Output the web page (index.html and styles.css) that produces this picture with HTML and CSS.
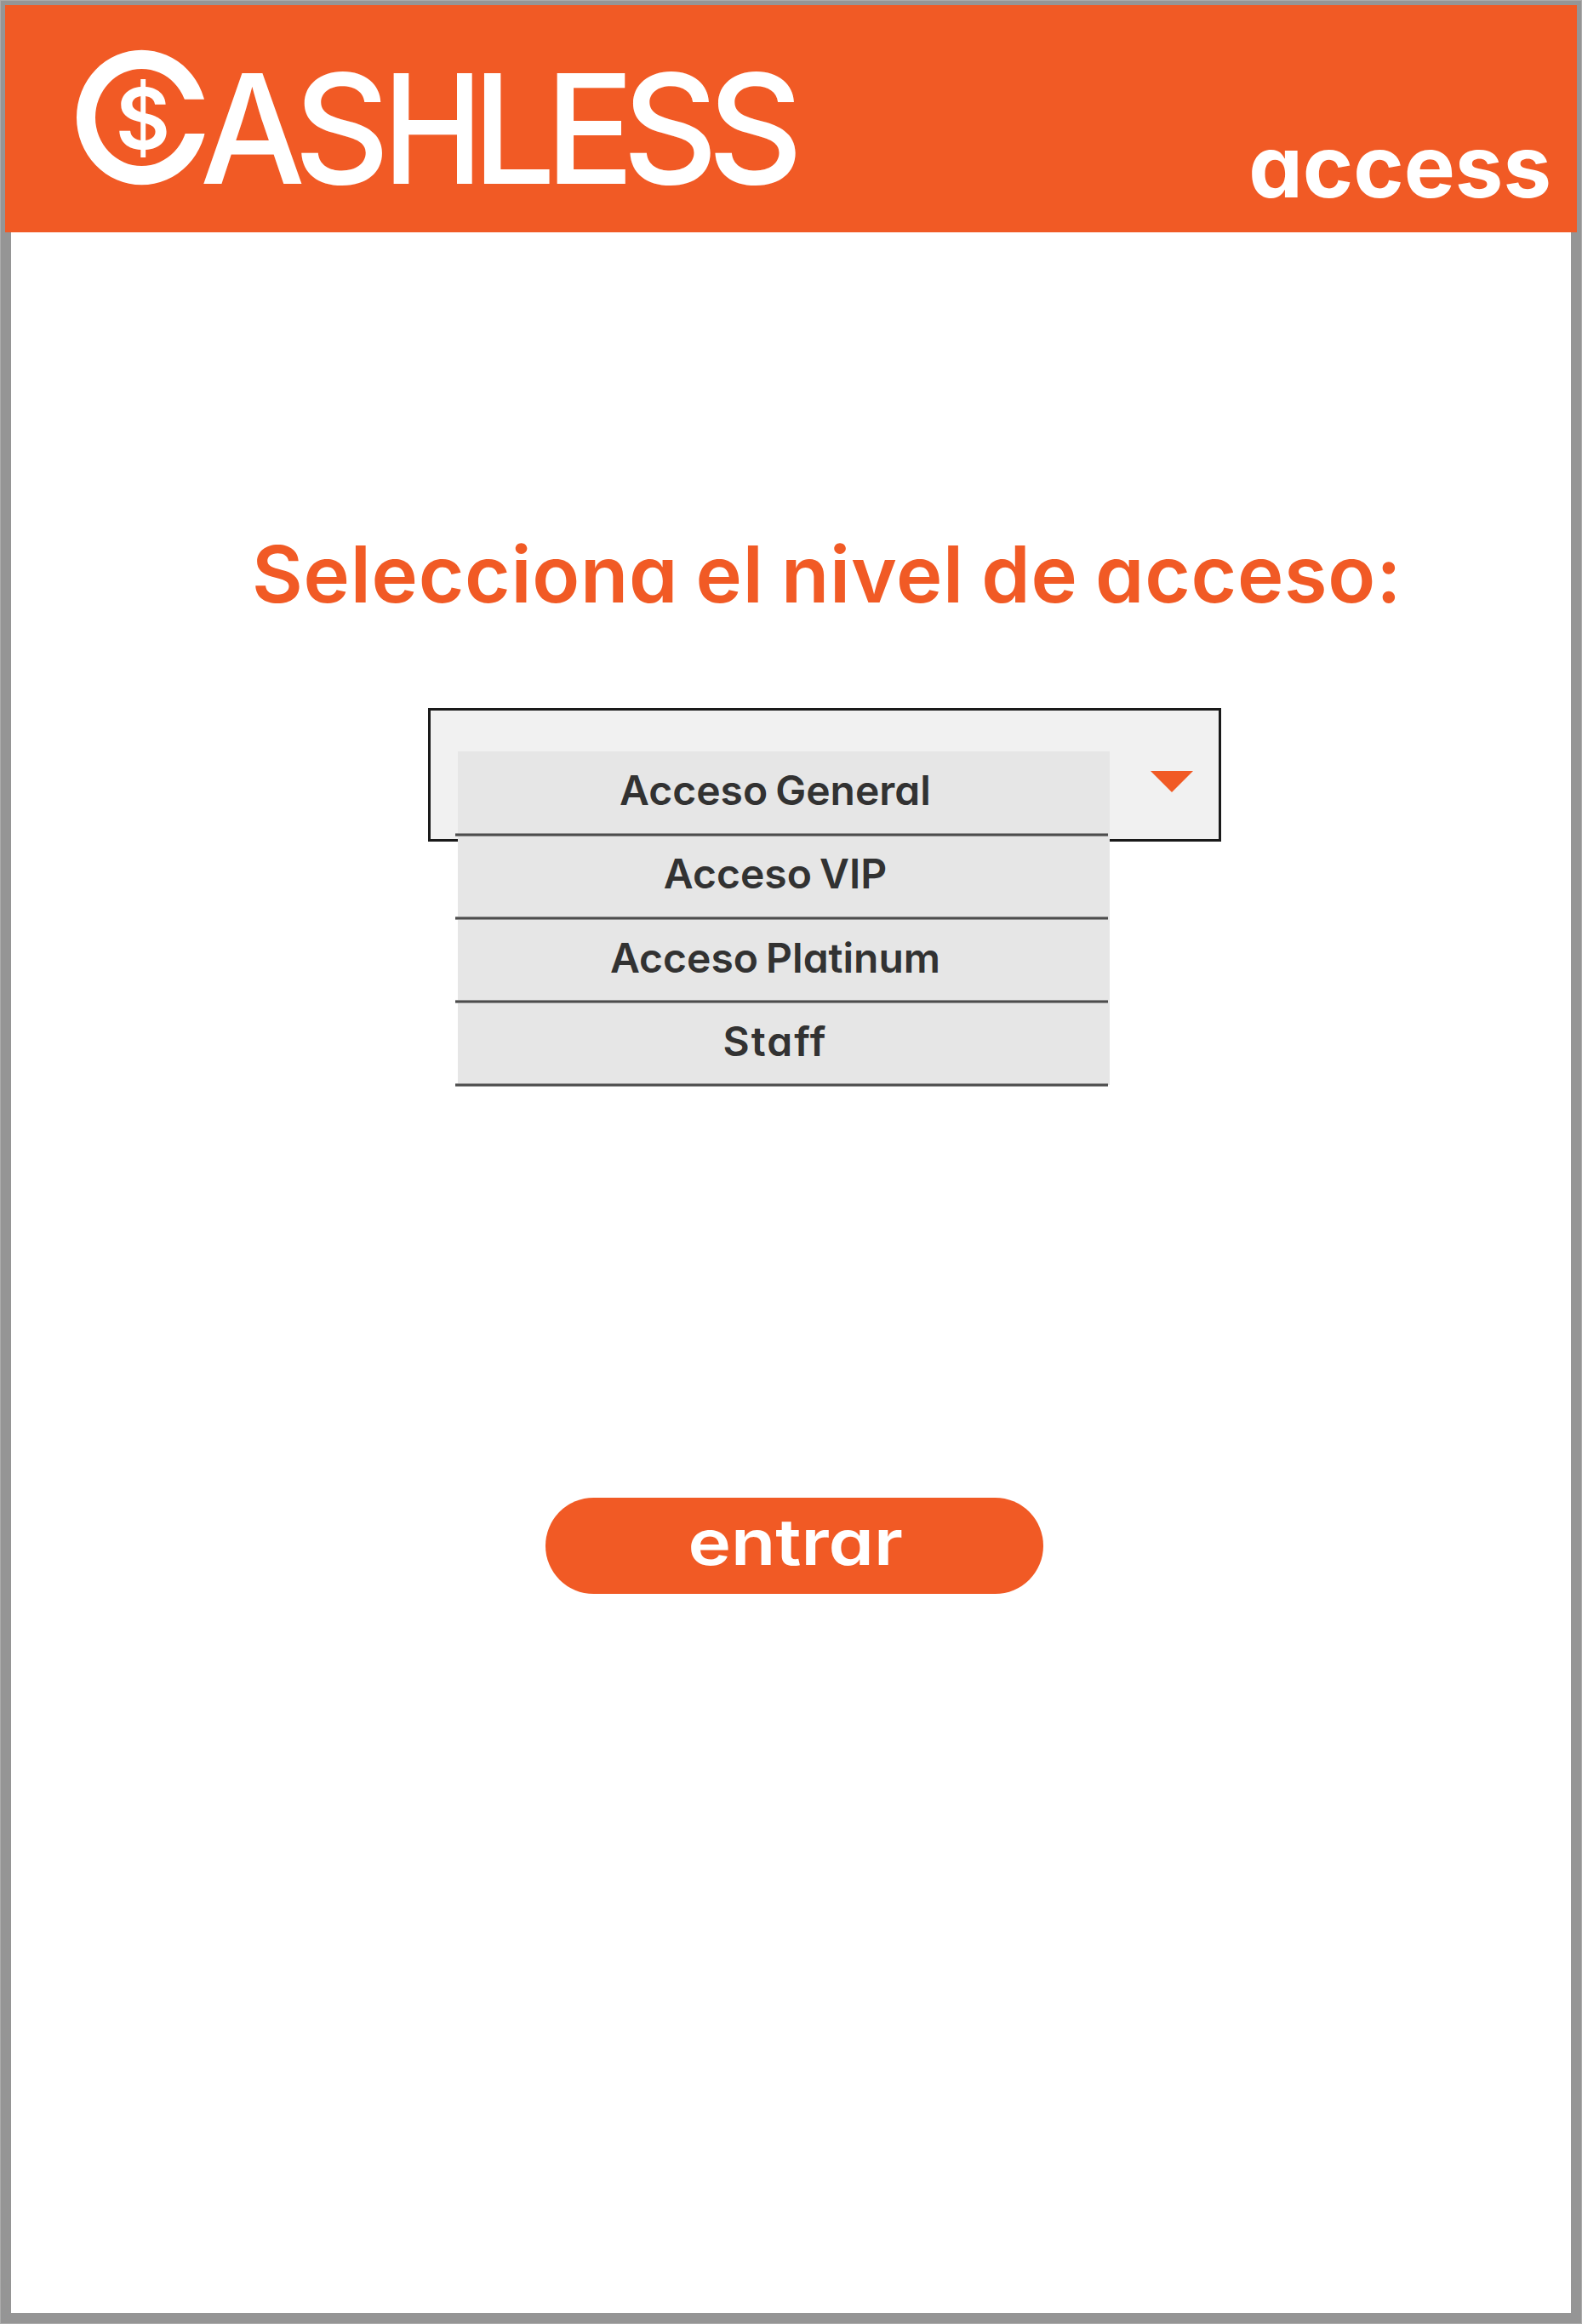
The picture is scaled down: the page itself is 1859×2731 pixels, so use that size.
FILE: index.html
```html
<!DOCTYPE html>
<html lang="es">
<head>
<meta charset="utf-8">
<title>Cashless access</title>
<link rel="stylesheet" href="styles.css">
</head>
<body>
<div class="screen">
  <header class="header">
    <svg class="logo" viewBox="80 6 910 266" width="910" height="266" role="img" aria-label="Cashless">
      <clipPath id="gap"><path d="M80 50H260V116.7H190V157H260V230H80Z"/></clipPath>
      <path clip-path="url(#gap)" fill="#fff" fill-rule="evenodd" d="M90 138a76.4 79.3 0 0 1 152.8 0a76.4 79.3 0 0 1 -152.8 0ZM112 138a54.4 57 0 0 0 108.8 0a54.4 57 0 0 0 -108.8 0Z"/>
      <text class="coin" text-anchor="middle" x="168" y="175">$</text>
      <g class="word">
        <text transform="translate(235 216.4) scale(.975 1)" x="0 113">AS</text>
        <text transform="translate(450 216.4) scale(.88 1)">H</text>
        <text transform="translate(555 216.4) scale(.97 1)" x="0 88.5 182 285">LESS</text>
      </g>
    </svg>
    <span class="section">access</span>
  </header>
  <main class="main">
    <h1 class="title">Selecciona el nivel de acceso:</h1>
    <div class="select">
      <svg class="arrow" viewBox="0 0 50 25" width="50" height="25"><path d="M0 0H50L25 25Z"/></svg>
      <ul class="options">
        <li>Acceso General</li>
        <li>Acceso VIP</li>
        <li class="low">Acceso Platinum</li>
        <li class="low wide">Staff</li>
      </ul>
    </div>
    <button class="enter" type="button"><span class="enter-label">entrar</span></button>
  </main>
</div>
</body>
</html>
```
FILE: styles.css
```css
* { box-sizing: border-box; }
body { margin: 0; font-family: Inter, "Liberation Sans", sans-serif; font-feature-settings: "cv11"; background: #fff; }
.screen { height: 2731px; padding: 5px 5px 12px; border: 1px solid #acacac; background: #959595; display: flex; flex-direction: column; }
.header { height: 267px; flex: none; background: #f15a25; display: flex; justify-content: space-between; padding: 0 30px 0 74px; color: #fff; }
.logo { display: block; flex: none; overflow: visible; }
.word { font-size: 179px; font-weight: 550; fill: #fff; }
.coin { font-size: 99px; font-weight: 600; fill: #fff; }
.section { font-size: 101px; font-weight: 700; line-height: 120px; padding-top: 129px; }
.main { flex: 1; margin: 0 7px; background: #fff; display: flex; flex-direction: column; }
.title { margin: 347px 0 0 283px; font-size: 92px; line-height: 110px; font-weight: 630; letter-spacing: .75px; word-spacing: -3.5px; color: #f15a25; white-space: nowrap; }
.select { position: relative; flex: none; margin: 102px 0 0 490px; width: 932px; height: 157px; border: 3px solid #1a1a1a; background: #f1f1f1; }
.arrow { position: absolute; left: 846px; top: 71px; fill: #f15a25; }
.options { position: absolute; left: 32px; top: 48px; width: 766px; margin: 0; padding: 0; list-style: none; }
.options li { position: relative; height: 98px; background: #e6e6e6; text-align: center; padding-right: 20px; font-size: 48px; line-height: 91px; font-weight: 620; letter-spacing: 0; word-spacing: -3px; color: #323232; }
.options .low { line-height: 93px; }
.options .wide { letter-spacing: 2px; }
.options li::after { content: ""; position: absolute; left: -3px; bottom: -2px; width: 767px; height: 4px; background: linear-gradient(#909090 1px, #4d4d4d 1px 3px, #909090 3px); z-index: 1; }
.enter { margin: 771px 0 0 628px; width: 585px; height: 113px; border: 0; border-radius: 57px; background: #f15a25; color: #fff; font: 600 75px/90px Inter, sans-serif; font-feature-settings: "cv11"; padding: 0 0 10px 3px; }
.enter-label { display: inline-block; transform: scaleX(1.14); }
```
